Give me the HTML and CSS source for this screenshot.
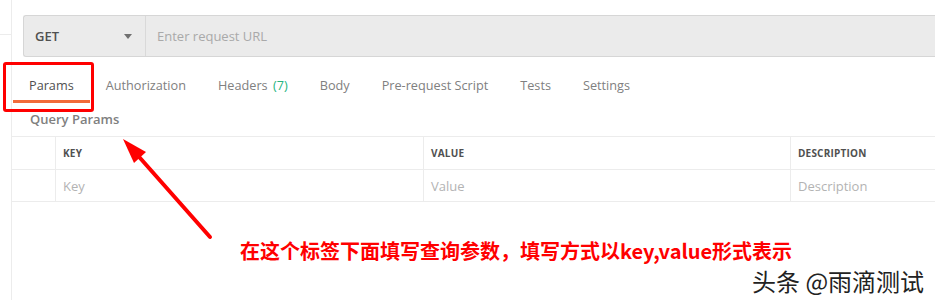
FILE: index.html
```html
<!DOCTYPE html>
<html lang="en">
<head>
  <meta charset="UTF-8" />
  <title>Request Params</title>
  <link rel="stylesheet" href="styles.css">
</head>
<body>
  <div class="app">
    <!-- left rail -->
    <div class="rail">
      <div class="rail-top"></div>
    </div>

    <!-- request panel -->
    <div class="main">
      <div class="url-bar">
        <div class="method">
          <span>GET</span>
          <span class="caret"></span>
        </div>
        <div class="url-input">Enter request URL</div>
      </div>

      <div class="tabs">
        <div class="tab active">Params</div>
        <div class="tab">Authorization</div>
        <div class="tab">Headers <span class="count">(7)</span></div>
        <div class="tab">Body</div>
        <div class="tab">Pre-request Script</div>
        <div class="tab">Tests</div>
        <div class="tab">Settings</div>
      </div>

      <div class="section-title">Query Params</div>

      <div class="params-table">
        <div class="row head">
          <div class="cell check"></div>
          <div class="cell">KEY</div>
          <div class="cell">VALUE</div>
          <div class="cell">DESCRIPTION</div>
        </div>
        <div class="row">
          <div class="cell check"></div>
          <div class="cell ph">Key</div>
          <div class="cell ph">Value</div>
          <div class="cell ph">Description</div>
        </div>
      </div>
    </div>
  </div>

  <!-- annotations -->
  <div class="mark-box"></div>
  <svg class="arrow" width="935" height="300" viewBox="0 0 935 300">
    <line x1="210" y1="237" x2="133" y2="150" stroke="#ff0000" stroke-width="4" stroke-linecap="round"/>
    <polygon points="123,139 146,152 134,163" fill="#ff0000"/>
  </svg>
  <div class="note">在这个标签下面填写查询参数，填写方式以key,value形式表示</div>
  <div class="watermark">头条 @雨滴测试</div>
</body>
</html>
```

FILE: styles.css
```css
* {
  box-sizing: border-box;
}

body {
  margin: 0;
  background: #fff;
  font-family: 'Open Sans', sans-serif;
  color: #505050;
  height: 300px;
  overflow: hidden;
  position: relative;
}

.app {
  display: flex;
  height: 300px;
}

.rail {
  width: 12px;
  border-right: 1px solid #ececec;
  flex-shrink: 0;
}

.rail-top {
  height: 35px;
  border-bottom: 1px solid #ececec;
}

.main {
  flex: 1;
  padding-top: 15px;
  display: flex;
  flex-direction: column;
  min-width: 0;
}

.url-bar {
  display: flex;
  height: 42px;
  margin-left: 11px;
  background: #ebebeb;
  border: 1px solid #d6d6d6;
  border-right: none;
  border-radius: 3px 0 0 3px;
}

.method {
  width: 122px;
  display: flex;
  align-items: center;
  justify-content: space-between;
  padding: 0 13px 0 11px;
  border-right: 1px solid #d9d9d9;
  font-size: 13px;
  font-weight: 600;
  color: #505050;
}

.caret {
  width: 0;
  height: 0;
  border-left: 4px solid transparent;
  border-right: 4px solid transparent;
  border-top: 5px solid #707070;
}

.url-input {
  display: flex;
  align-items: center;
  padding-left: 11px;
  font-size: 13px;
  color: #a9a9a9;
}

.tabs {
  display: flex;
  margin-top: 13px;
  height: 33px;
}

.tab {
  padding: 6px 16px 0;
  font-size: 12.7px;
  color: #808080;
  white-space: nowrap;
}

.tab:first-child {
  margin-left: 1px;
}

.tab.active {
  color: #505050;
  border-bottom: 3px solid #f26b3a;
}

.count {
  margin-left: 2px;
  color: #26b47f;
}

.section-title {
  padding: 7px 0 0 18px;
  height: 33px;
  font-size: 13px;
  font-weight: 600;
  color: #808080;
}

.params-table {
  border-top: 1px solid #ececec;
}

.row {
  display: grid;
  grid-template-columns: 43px 368px 367px 1fr;
  height: 33px;
  border-bottom: 1px solid #ececec;
}

.row + .row {
  height: 32px;
}

.cell {
  display: flex;
  align-items: center;
  padding-left: 7px;
  font-size: 13px;
  border-left: 1px solid #ececec;
  white-space: nowrap;
}

.cell.check {
  border-left: none;
}

.head .cell {
  font-size: 10px;
  font-weight: 700;
  color: #505050;
  letter-spacing: 0.2px;
}

.cell.ph {
  color: #b3b3b3;
}

/* overlays */
.mark-box {
  position: absolute;
  left: 3px;
  top: 62px;
  width: 91px;
  height: 50px;
  border: 3px solid #ff0000;
  border-radius: 3px;
}

.arrow {
  position: absolute;
  left: 0;
  top: 0;
}

.note {
  position: absolute;
  left: 240px;
  top: 238px;
  font-family: 'Noto Sans CJK SC', sans-serif;
  font-size: 20px;
  font-weight: 700;
  color: #ff0000;
  line-height: 26px;
  white-space: nowrap;
}

.watermark {
  position: absolute;
  left: 752px;
  top: 266px;
  font-family: 'Noto Sans CJK SC', sans-serif;
  font-size: 24px;
  color: #222;
  line-height: 30px;
  white-space: nowrap;
  text-shadow: 0 0 2px #fff;
}
```
